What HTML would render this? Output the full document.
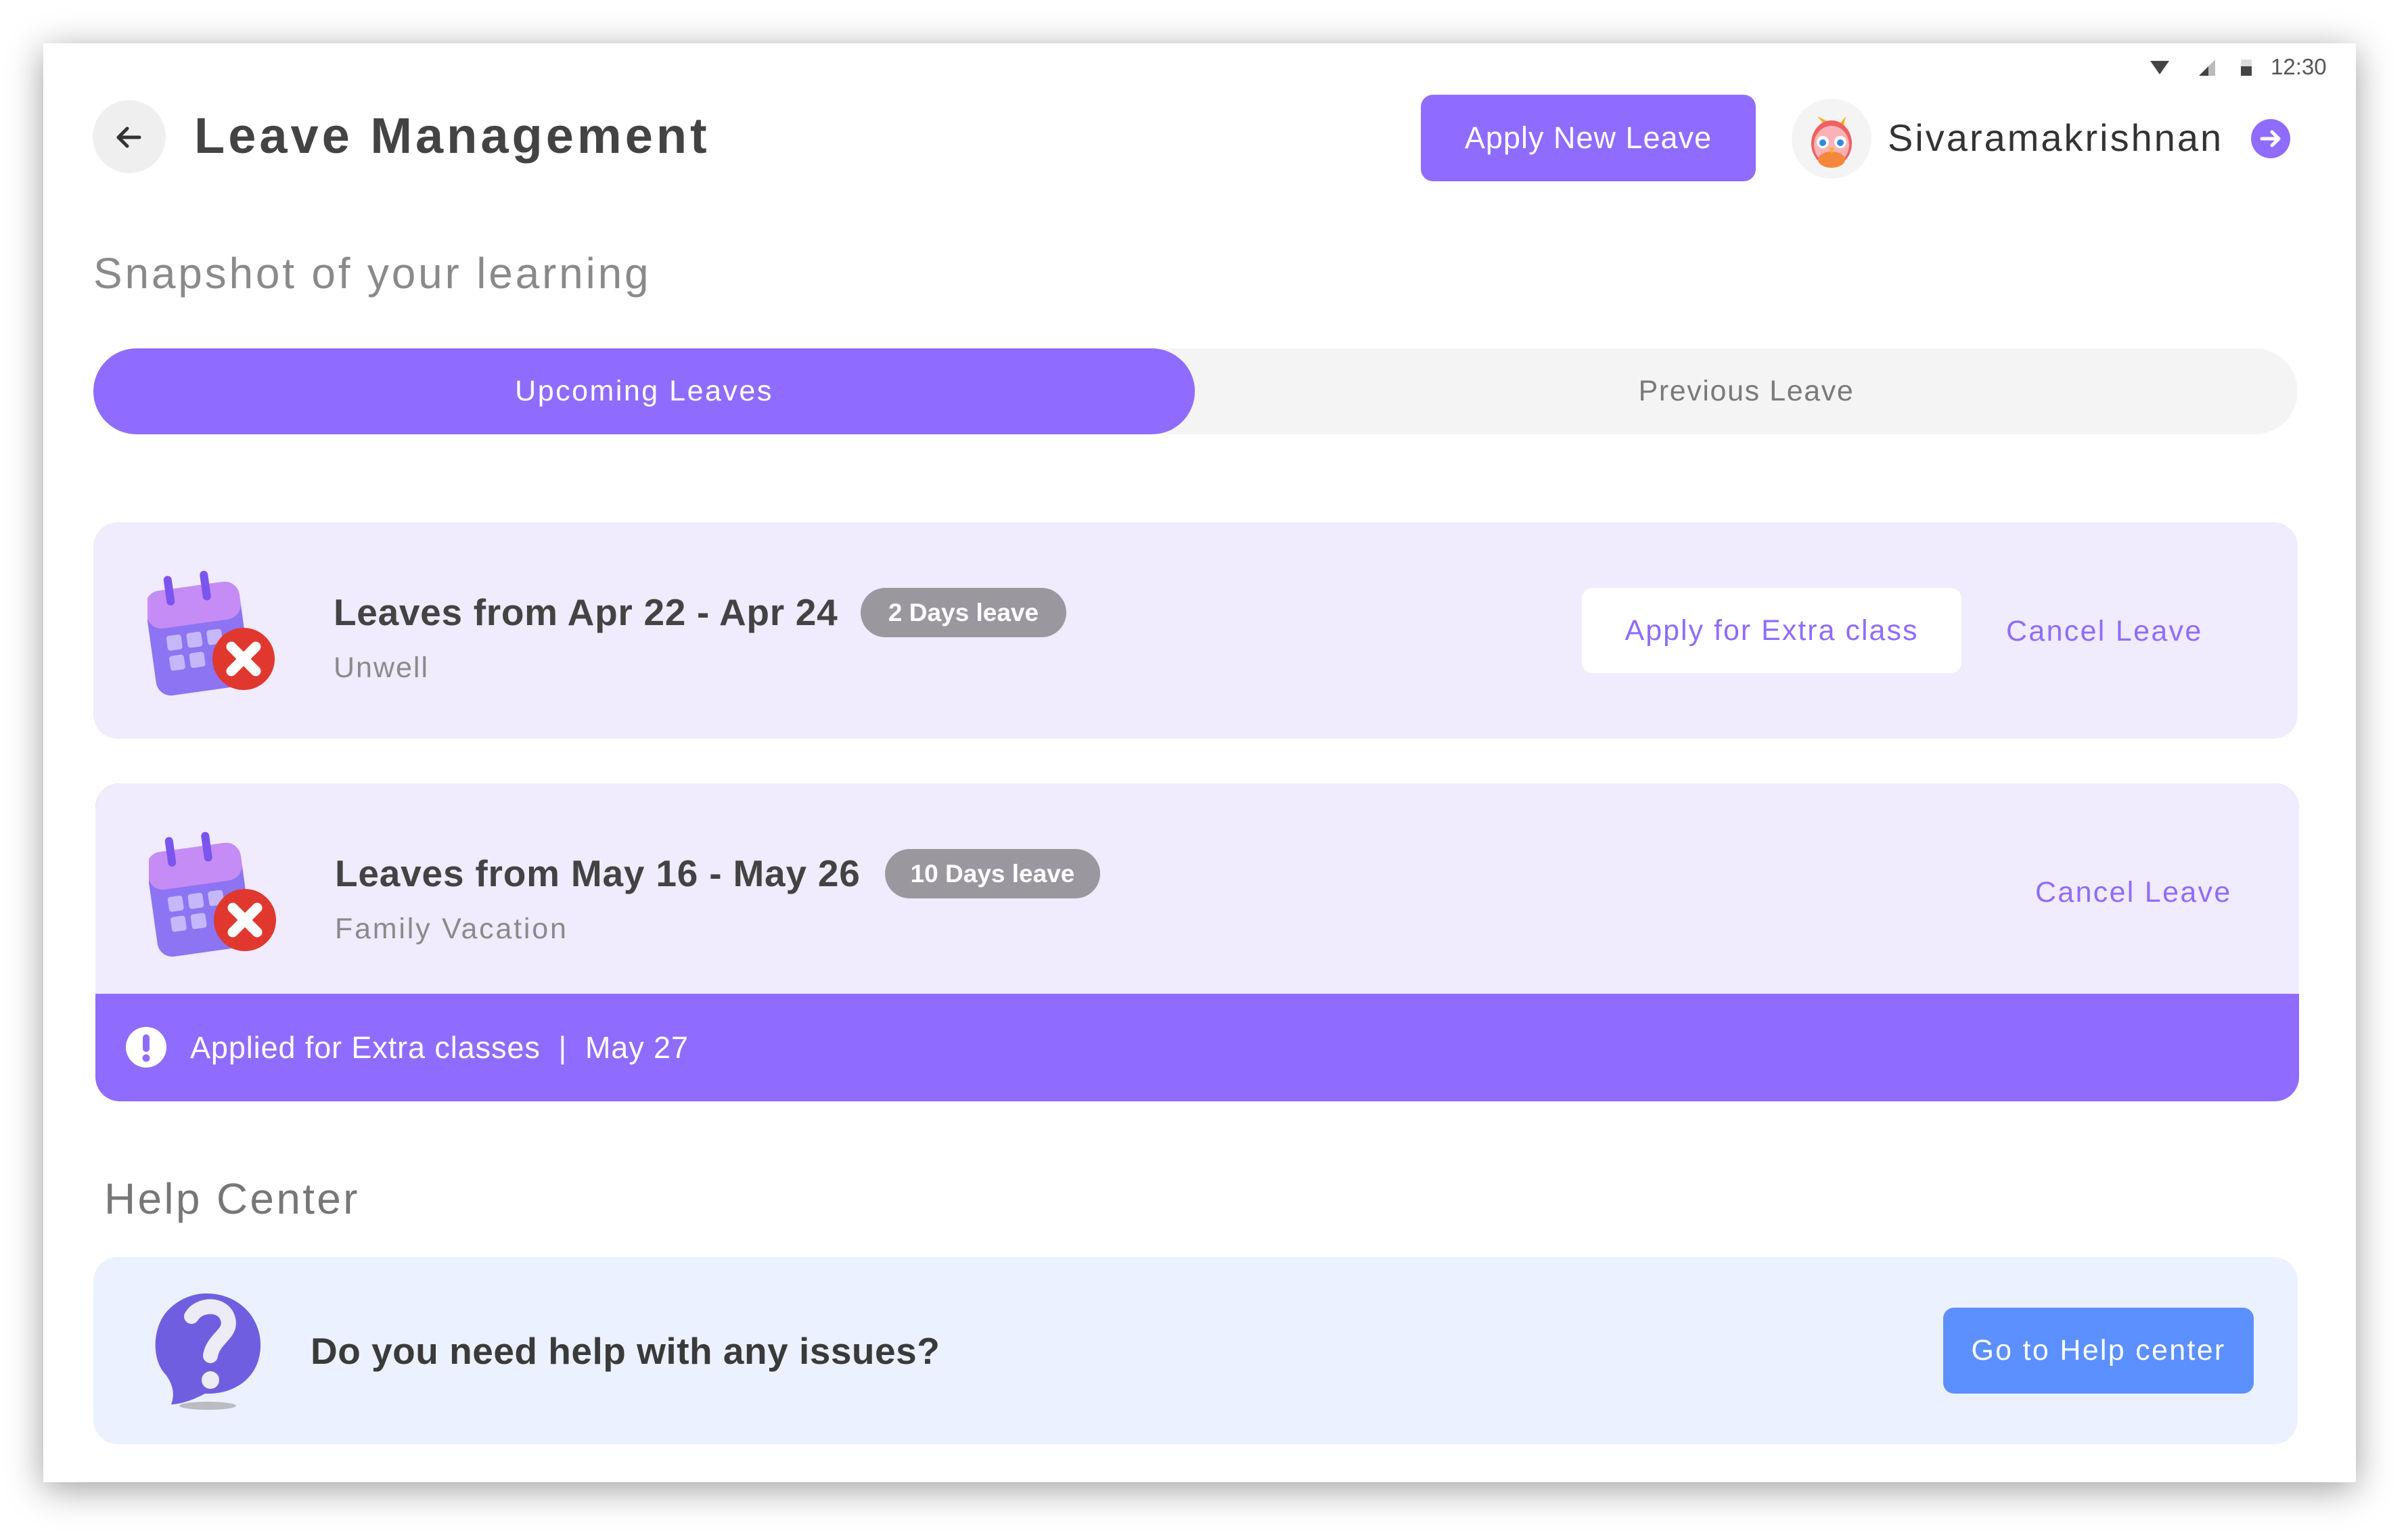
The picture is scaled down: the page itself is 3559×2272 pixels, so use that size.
<!DOCTYPE html>
<html><head><meta charset="utf-8">
<style>
*{margin:0;padding:0;box-sizing:border-box}
html,body{width:3559px;height:2272px;background:#fff;overflow:hidden;font-family:"Liberation Sans",sans-serif}
.frame{position:absolute;left:64px;top:64px;width:3418px;height:2127px;background:#fff;box-shadow:0 10px 50px rgba(0,0,0,.38)}
.a{position:absolute;white-space:nowrap}
.t{line-height:1}
</style></head><body>
<div class="frame"></div>

<svg class="a" style="left:3176px;top:84px" width="210" height="32" viewBox="0 0 210 32">
<path d="M2 6 L30 6 L16 26 Z" fill="#444"/>
<path d="M74 28 L98 4 L98 28 Z" fill="#bbb"/><path d="M74 28 L88 14 L88 28 Z" fill="#444"/>
<rect x="136" y="4" width="16" height="24" fill="#ddd"/><rect x="136" y="14" width="16" height="14" fill="#444"/>
</svg>
<div class="a t" style="left:3356px;top:82px;font-size:33px;color:#555">12:30</div>

<div class="a" style="left:137px;top:148px;width:108px;height:108px;border-radius:50%;background:#efefef"></div>
<svg class="a" style="left:166px;top:178px" width="50" height="50" viewBox="0 0 50 50"><path d="M40 25 H10 M22 12 L9 25 L22 38" stroke="#333" stroke-width="5" fill="none" stroke-linecap="round" stroke-linejoin="round"/></svg>
<div class="a t" style="left:287px;top:164px;font-size:74px;font-weight:bold;color:#434343;letter-spacing:5px">Leave Management</div>

<div class="a" style="left:2100px;top:140px;width:495px;height:128px;border-radius:18px;background:#8f6cfd;color:#fff;font-size:45px;letter-spacing:1px;display:flex;align-items:center;justify-content:center">Apply New Leave</div>

<div class="a" style="left:2648px;top:146px;width:118px;height:118px;border-radius:50%;background:#f4f4f4"></div>
<svg class="a" style="left:2666px;top:162px" width="82" height="88" viewBox="0 0 82 88">
<path d="M20 10 L30 22 L52 22 L62 10 L58 28 Z" fill="#f7b12c"/>
<ellipse cx="41" cy="50" rx="30" ry="34" fill="#f06060"/>
<ellipse cx="41" cy="52" rx="26" ry="28" fill="#f9b3b8"/>
<ellipse cx="41" cy="74" rx="20" ry="12" fill="#f5873c"/>
<circle cx="28" cy="48" r="9" fill="#fff"/><circle cx="54" cy="48" r="9" fill="#fff"/>
<circle cx="28" cy="49" r="5" fill="#2f8be0"/><circle cx="54" cy="49" r="5" fill="#2f8be0"/>
<path d="M37 56 L45 56 L41 66 Z" fill="#f7b12c"/>
</svg>
<div class="a t" style="left:2790px;top:176px;font-size:56px;color:#333;letter-spacing:3px">Sivaramakrishnan</div>
<svg class="a" style="left:3326px;top:175px" width="60" height="60" viewBox="0 0 60 60"><circle cx="30" cy="30" r="29" fill="#8f6cfd"/><path d="M17 30 H42 M32 20 L42 30 L32 40" stroke="#fff" stroke-width="5" fill="none" stroke-linecap="round" stroke-linejoin="round"/></svg>

<div class="a t" style="left:138px;top:372px;font-size:64px;color:#8a8a8a;letter-spacing:3.8px">Snapshot of your learning</div>

<div class="a" style="left:138px;top:515px;width:3258px;height:127px;border-radius:64px;background:#f4f4f4"></div>
<div class="a" style="left:138px;top:515px;width:1628px;height:127px;border-radius:64px;background:#8f6cfd;color:#fff;font-size:43px;letter-spacing:2.5px;display:flex;align-items:center;justify-content:center">Upcoming Leaves</div>
<div class="a" style="left:1766px;top:515px;width:1630px;height:127px;color:#7a7a7a;font-size:43px;letter-spacing:1.6px;display:flex;align-items:center;justify-content:center">Previous Leave</div>

<svg width="0" height="0" style="position:absolute">
<defs>
<g id="cal">
<rect x="4" y="24" width="140" height="156" rx="22" fill="#8c74f3" transform="rotate(-8 74 100)"/>
<rect x="4" y="24" width="140" height="56" rx="22" fill="#c68cf5" transform="rotate(-8 74 100)"/>
<g fill="#c4b8fb" transform="rotate(-8 74 100)">
<rect x="28" y="92" width="22" height="22" rx="4"/><rect x="58" y="92" width="22" height="22" rx="4"/><rect x="88" y="92" width="22" height="22" rx="4"/>
<rect x="28" y="122" width="22" height="22" rx="4"/><rect x="58" y="122" width="22" height="22" rx="4"/>
</g>
<rect x="36" y="4" width="12" height="44" rx="6" fill="#7a55ee" transform="rotate(-8 74 100)"/>
<rect x="90" y="4" width="12" height="44" rx="6" fill="#7a55ee" transform="rotate(-8 74 100)"/>
<circle cx="142" cy="132" r="46" fill="#e0382e"/>
<path d="M124 114 L160 150 M160 114 L124 150" stroke="#fff" stroke-width="15" stroke-linecap="round"/>
</g>
</defs></svg>

<div class="a" style="left:138px;top:772px;width:3258px;height:320px;border-radius:36px;background:#f0ebfd"></div>
<svg class="a" style="left:218px;top:842px" width="200" height="190" viewBox="0 0 200 190"><use href="#cal"/></svg>
<div class="a t" style="left:493px;top:878px;font-size:55px;font-weight:bold;color:#434343;letter-spacing:0.7px">Leaves from Apr 22 - Apr 24</div>
<div class="a" style="left:1272px;top:869px;width:304px;height:73px;border-radius:37px;background:#9b979f;color:#fff;font-size:37px;font-weight:bold;display:flex;align-items:center;justify-content:center">2 Days leave</div>
<div class="a t" style="left:493px;top:966px;font-size:43px;color:#8a8a8a;letter-spacing:2px">Unwell</div>
<div class="a" style="left:2338px;top:869px;width:561px;height:126px;border-radius:16px;background:#fff;color:#8f6cfd;font-size:43px;letter-spacing:2px;display:flex;align-items:center;justify-content:center">Apply for Extra class</div>
<div class="a t" style="left:2965px;top:912px;font-size:43px;color:#8f6cfd;letter-spacing:2.3px">Cancel Leave</div>

<div class="a" style="left:141px;top:1158px;width:3257px;height:470px;border-radius:36px;background:#8f6cfd;overflow:hidden">
<div style="position:absolute;left:0;top:0;width:100%;height:311px;background:#f0ebfd"></div>
</div>
<svg class="a" style="left:220px;top:1228px" width="200" height="190" viewBox="0 0 200 190"><use href="#cal"/></svg>
<div class="a t" style="left:495px;top:1264px;font-size:55px;font-weight:bold;color:#434343;letter-spacing:0.8px">Leaves from May 16 - May 26</div>
<div class="a" style="left:1308px;top:1255px;width:318px;height:73px;border-radius:37px;background:#9b979f;color:#fff;font-size:37px;font-weight:bold;display:flex;align-items:center;justify-content:center">10 Days leave</div>
<div class="a t" style="left:495px;top:1352px;font-size:43px;color:#8a8a8a;letter-spacing:2.8px">Family Vacation</div>
<div class="a t" style="left:3008px;top:1298px;font-size:43px;color:#8f6cfd;letter-spacing:2.3px">Cancel Leave</div>
<svg class="a" style="left:185px;top:1517px" width="62" height="62" viewBox="0 0 62 62"><circle cx="31" cy="31" r="30" fill="#fff"/><rect x="26" y="12" width="10" height="26" rx="5" fill="#8f6cfd"/><circle cx="31" cy="47" r="5.5" fill="#8f6cfd"/></svg>
<div class="a t" style="left:281px;top:1526px;font-size:45px;color:#fff;letter-spacing:0.9px">Applied for Extra classes&nbsp;&nbsp;|&nbsp;&nbsp;May 27</div>

<div class="a t" style="left:154px;top:1740px;font-size:64px;color:#777;letter-spacing:3.3px">Help Center</div>
<div class="a" style="left:138px;top:1858px;width:3258px;height:277px;border-radius:36px;background:#ebf1fe"></div>
<svg class="a" style="left:215px;top:1900px" width="180" height="200" viewBox="0 0 180 200">
<ellipse cx="92" cy="178" rx="42" ry="6" fill="#999" opacity=".6"/>
<path d="M90 12 C138 12 172 48 170 92 C168 136 132 162 88 160 C70 170 50 176 38 176 C44 160 40 146 30 132 C8 110 10 60 34 36 C50 20 70 12 90 12 Z" fill="#6f5fe0"/>
<path d="M68 46 C80 26 116 26 122 50 C128 72 100 78 96 104" stroke="#ecebf6" stroke-width="22" fill="none" stroke-linecap="round"/>
<circle cx="96" cy="140" r="13" fill="#ecebf6"/>
</svg>
<div class="a t" style="left:459px;top:1970px;font-size:55px;font-weight:bold;color:#3a3a3a;letter-spacing:0.5px">Do you need help with any issues?</div>
<div class="a" style="left:2872px;top:1933px;width:459px;height:127px;border-radius:16px;background:#5b90fe;color:#fff;font-size:43px;letter-spacing:2.3px;display:flex;align-items:center;justify-content:center">Go to Help center</div>
</body></html>
